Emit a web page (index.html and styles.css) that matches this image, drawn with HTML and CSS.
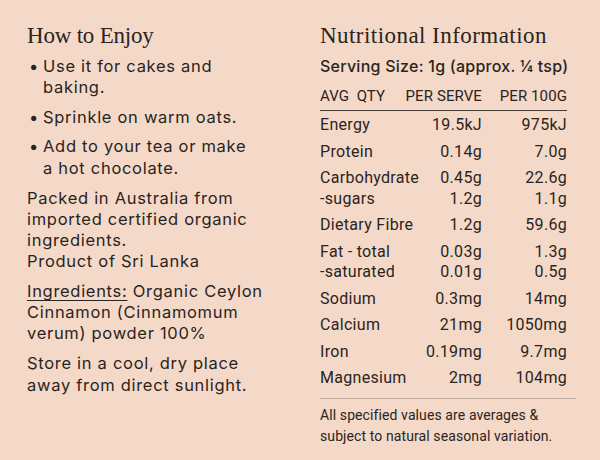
FILE: index.html
```html
<!DOCTYPE html>
<html>
<head>
<meta charset="utf-8">
<link rel="stylesheet" href="styles.css">
</head>
<body>
<div class="page">
  <section class="left">
    <h2 class="title">How to Enjoy</h2>
    <ul class="bullets">
      <li>Use it for cakes and baking.</li>
      <li>Sprinkle on warm oats.</li>
      <li>Add to your tea or make a hot chocolate.</li>
    </ul>
    <p class="para">Packed in Australia from imported certified organic ingredients.<br>Product of Sri Lanka</p>
    <p class="para"><span class="ul">Ingredients:</span> Organic Ceylon Cinnamon (Cinnamomum verum) powder 100%</p>
    <p class="para">Store in a cool, dry place away from direct sunlight.</p>
  </section>
  <section class="right">
    <h2 class="title">Nutritional Information</h2>
    <div class="serving">Serving Size: 1g (approx. ¼ tsp)</div>
    <div class="table">
      <div class="row head">
        <div class="lab">AVG&nbsp;&nbsp;QTY</div>
        <div class="v1">PER SERVE</div>
        <div class="v2">PER 100G</div>
      </div>
      <div class="rows">
        <div class="row"><div class="lab">Energy</div><div class="v1">19.5kJ</div><div class="v2">975kJ</div></div>
        <div class="row"><div class="lab">Protein</div><div class="v1">0.14g</div><div class="v2">7.0g</div></div>
        <div class="row"><div class="lab">Carbohydrate<br>-sugars</div><div class="v1">0.45g<br>1.2g</div><div class="v2">22.6g<br>1.1g</div></div>
        <div class="row"><div class="lab">Dietary Fibre</div><div class="v1">1.2g</div><div class="v2">59.6g</div></div>
        <div class="row"><div class="lab">Fat - total<br>-saturated</div><div class="v1">0.03g<br>0.01g</div><div class="v2">1.3g<br>0.5g</div></div>
        <div class="row"><div class="lab">Sodium</div><div class="v1">0.3mg</div><div class="v2">14mg</div></div>
        <div class="row"><div class="lab">Calcium</div><div class="v1">21mg</div><div class="v2">1050mg</div></div>
        <div class="row"><div class="lab">Iron</div><div class="v1">0.19mg</div><div class="v2">9.7mg</div></div>
        <div class="row"><div class="lab">Magnesium</div><div class="v1">2mg</div><div class="v2">104mg</div></div>
      </div>
      <p class="note">All specified values are averages &amp; subject to natural seasonal variation.</p>
    </div>
  </section>
</div>
</body>
</html>
```
FILE: styles.css
```css
html, body {
  margin: 0;
  padding: 0;
}
body {
  background: #f4d9c9;
  color: #2a2420;
  width: 600px;
  height: 460px;
  overflow: hidden;
}
.page {
  display: flex;
  padding-top: 22px;
}
.left {
  width: 320px;
  padding-left: 27px;
  padding-right: 56px;
  box-sizing: border-box;
  font-family: "Inter", "Open Sans", sans-serif;
  font-size: 16.5px;
  line-height: 21.2px;
  letter-spacing: 0.7px;
}
.right {
  width: 280px;
}
.title {
  margin: 0 0 5.5px;
  font-family: "Liberation Serif", serif;
  font-weight: 400;
  font-size: 23px;
  line-height: 28px;
  letter-spacing: -0.2px;
}
.right .title {
  letter-spacing: 0.45px;
}
.bullets {
  list-style: none;
  margin: 0;
  padding: 0 8px 0 16px;
}
.bullets li {
  position: relative;
  margin-bottom: 8.7px;
}
.bullets li::before {
  content: "•";
  position: absolute;
  left: -14px;
}
.para {
  margin: 0 0 8.7px;
}
.ul {
  text-decoration: underline;
  text-underline-offset: 3px;
  text-decoration-thickness: 1px;
}
.serving {
  font-family: "Inter", "Open Sans", sans-serif;
  font-weight: 500;
  font-size: 16px;
  line-height: 21px;
  letter-spacing: 0.25px;
  margin-bottom: 9px;
}
.table {
  font-family: "Roboto", sans-serif;
  font-size: 16px;
  letter-spacing: 0.3px;
}
.row {
  display: grid;
  grid-template-columns: 82px 80px 85px;
  width: 247px;
  line-height: 20.5px;
  white-space: nowrap;
}
.row .v1, .row .v2 {
  text-align: right;
}
.head {
  border-bottom: 1.5px solid #4a3f38;
  padding-bottom: 4px;
  font-size: 15px;
  letter-spacing: 0.1px;
}
.rows {
  display: flex;
  flex-direction: column;
  gap: 6px;
  padding-top: 4px;
  padding-bottom: 9.5px;
  border-bottom: 1.5px solid #bfae9f;
  width: 256px;
}
.note {
  margin: 0;
  padding-top: 6px;
  width: 256px;
  font-size: 14px;
  line-height: 21px;
  letter-spacing: 0.1px;
}
```
